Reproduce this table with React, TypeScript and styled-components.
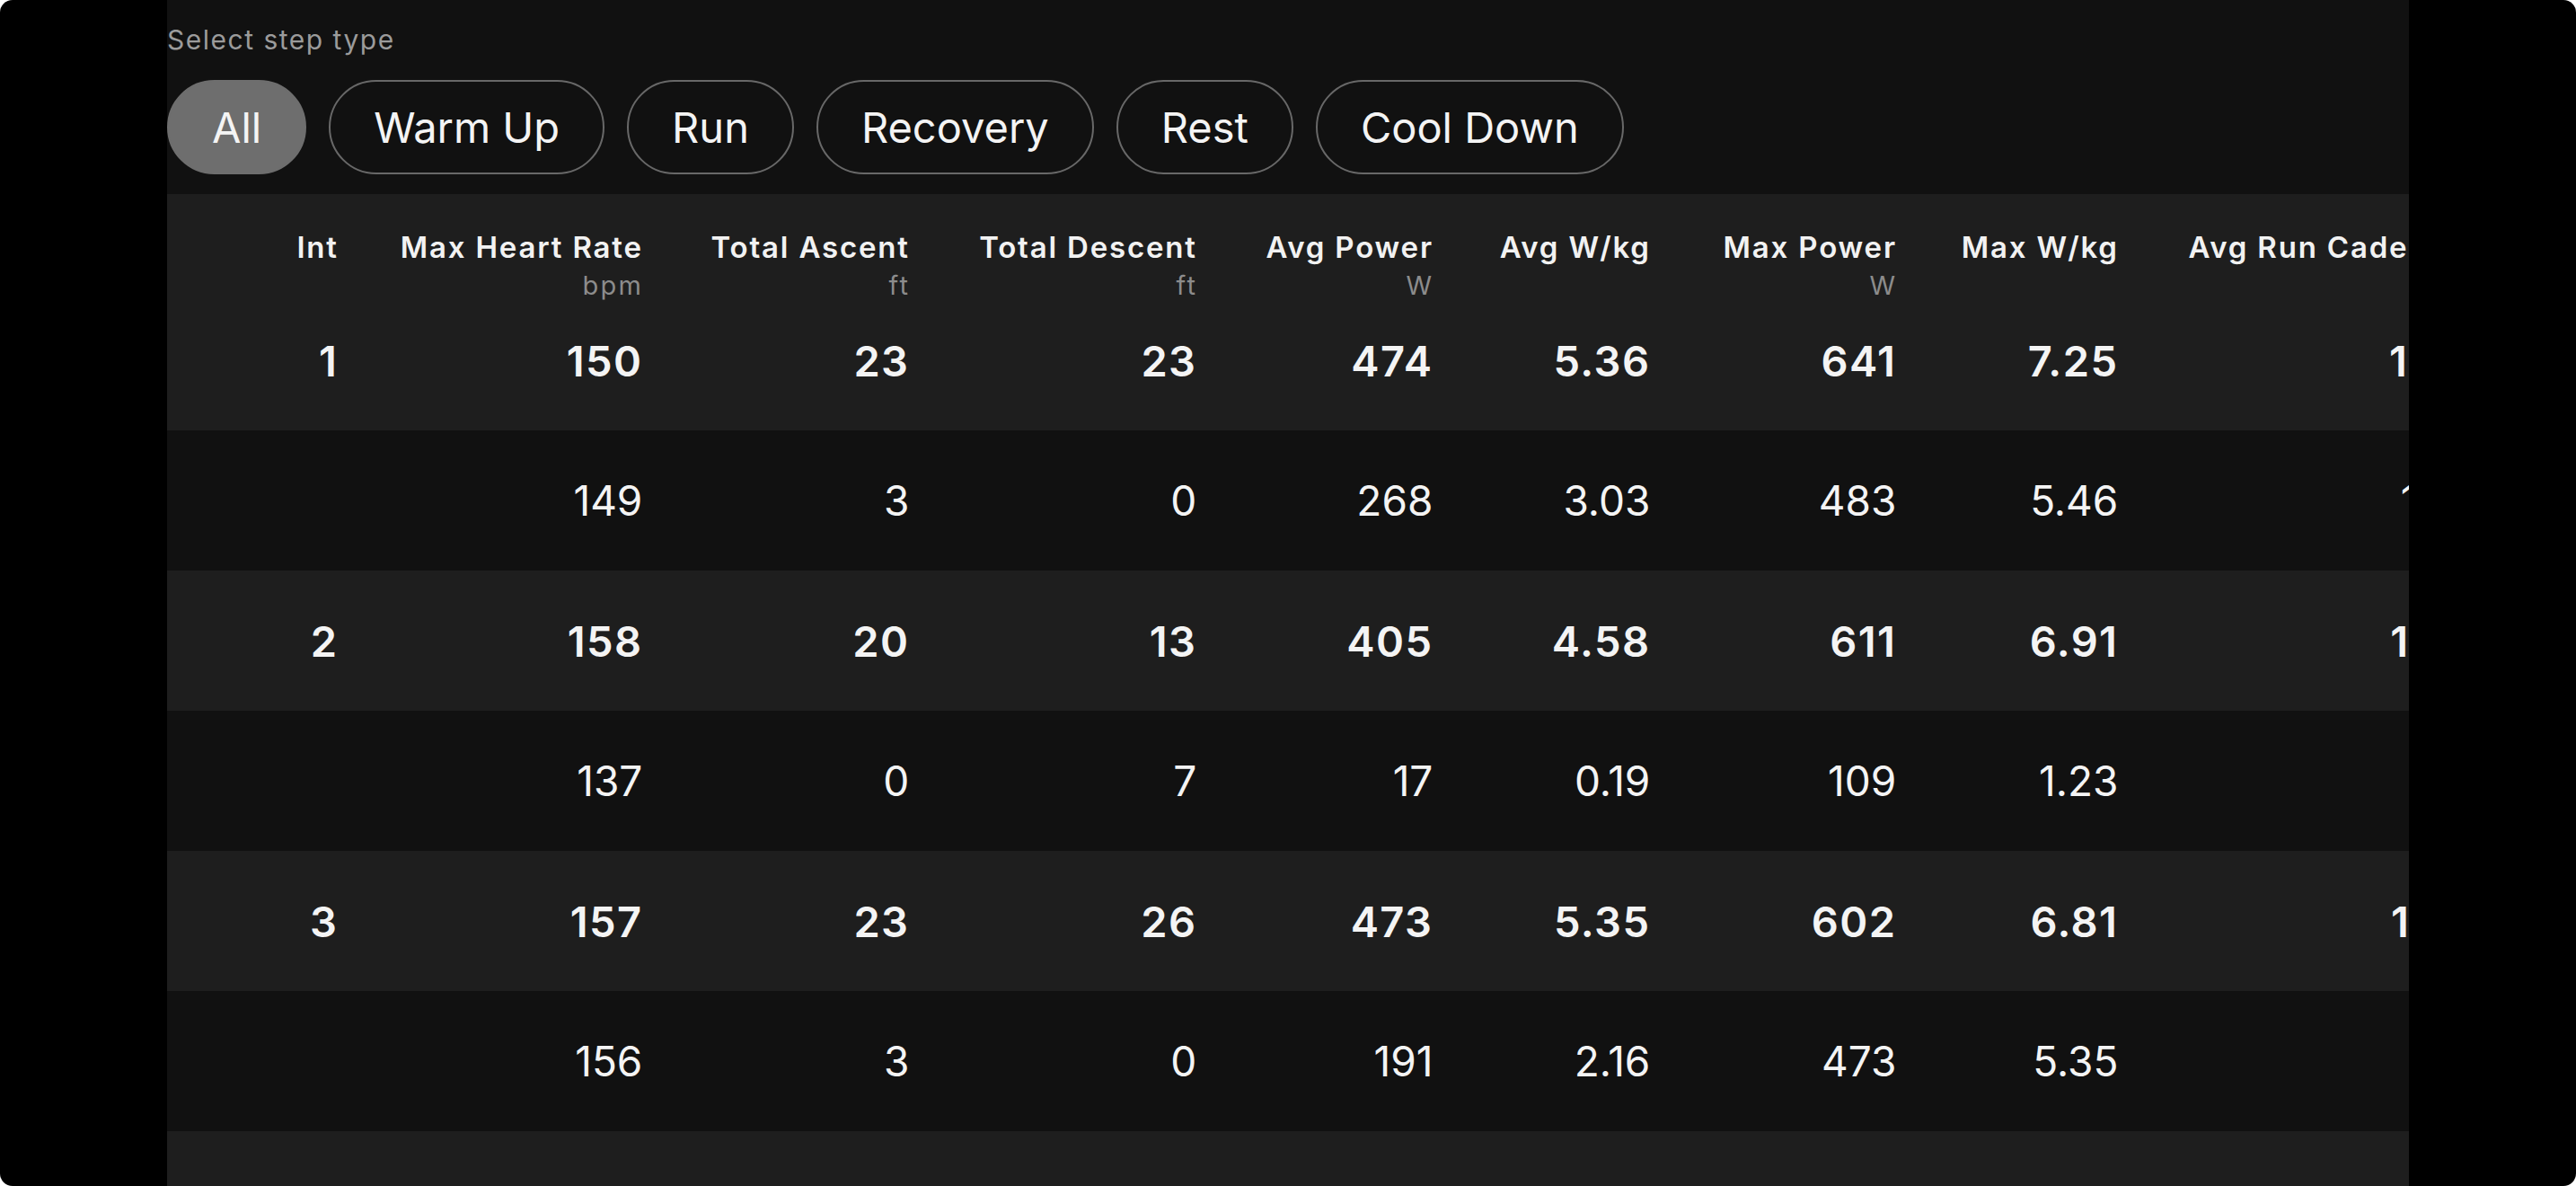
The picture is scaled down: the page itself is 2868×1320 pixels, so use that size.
import React from "react";
import styled, { createGlobalStyle } from "styled-components";

const GlobalStyle = createGlobalStyle`
  html, body {
    margin: 0;
    padding: 0;
    background: #ffffff;
  }
  body {
    font-family: Inter, "Liberation Sans", "Noto Sans", sans-serif;
    -webkit-font-smoothing: antialiased;
  }
  * { box-sizing: border-box; }
`;

const Frame = styled.div`
  width: 2868px;
  height: 1320px;
  background: #000000;
  border-radius: 14px;
  overflow: hidden;
  display: flex;
  justify-content: center;
`;

const Panel = styled.main`
  width: 2496px;
  height: 100%;
  background: #111111;
  overflow: hidden;
  display: flex;
  flex-direction: column;
`;

const FilterSection = styled.section`
  padding-top: 27px;
  display: flex;
  flex-direction: column;
  gap: 27px;
  margin-bottom: 22px;
`;

const FilterLabel = styled.div`
  font-size: 30px;
  line-height: 35px;
  color: #9b9b9b;
  letter-spacing: 0.05em;
`;

const PillRow = styled.div`
  display: flex;
  gap: 25px;
`;

const Pill = styled.button<{ $active?: boolean }>`
  height: 105px;
  padding: 0 48px;
  border-radius: 999px;
  border: 2px solid ${(p) => (p.$active ? "#6e6e6e" : "#686868")};
  background: ${(p) => (p.$active ? "#6e6e6e" : "transparent")};
  color: #f4f4f4;
  font-family: inherit;
  font-size: 47px;
  font-weight: 400;
  line-height: 57px;
  cursor: pointer;
`;

const COLS = "189px 339px 297px 320px 263px 242px 274px 247px 387px";

const HeaderRow = styled.div`
  position: relative;
  z-index: 1;
  display: grid;
  grid-template-columns: ${COLS};
  height: 107px;
  background: #1e1e1e;
  padding-top: 43px;
`;

const HeadCell = styled.div`
  display: flex;
  flex-direction: column;
  align-items: flex-end;
  white-space: nowrap;
`;

const HeadTitle = styled.span`
  font-size: 33px;
  line-height: 33px;
  font-weight: 600;
  color: #f2f2f2;
  letter-spacing: 0.055em;
  margin-right: -0.055em;
`;

const HeadUnit = styled.span`
  margin-top: 11px;
  font-size: 29px;
  line-height: 29px;
  font-weight: 400;
  color: #8c8c8c;
  letter-spacing: 0.08em;
  margin-right: -0.08em;
`;

const DataRow = styled.div<{ $summary?: boolean }>`
  display: grid;
  grid-template-columns: ${COLS};
  height: 156px;
  flex-shrink: 0;
  align-items: center;
  background: ${(p) => (p.$summary ? "#1e1e1e" : "#111111")};
  color: #f4f4f4;
  font-size: ${(p) => (p.$summary ? "47px" : "46px")};
  font-weight: ${(p) => (p.$summary ? 600 : 400)};
  letter-spacing: ${(p) => (p.$summary ? "0.03em" : "0")};
  line-height: 1;
`;

const Cell = styled.div`
  text-align: right;
  white-space: nowrap;
`;

const CellText = styled.span`
  margin-right: -0.03em;
`;

const columns: { title: string; unit?: string }[] = [
  { title: "Int" },
  { title: "Max Heart Rate", unit: "bpm" },
  { title: "Total Ascent", unit: "ft" },
  { title: "Total Descent", unit: "ft" },
  { title: "Avg Power", unit: "W" },
  { title: "Avg W/kg" },
  { title: "Max Power", unit: "W" },
  { title: "Max W/kg" },
  { title: "Avg Run Cadence", unit: "spm" },
];

const rows: { summary: boolean; values: string[] }[] = [
  { summary: true, values: ["1", "150", "23", "23", "474", "5.36", "641", "7.25", "184"] },
  { summary: false, values: ["", "149", "3", "0", "268", "3.03", "483", "5.46", "178"] },
  { summary: true, values: ["2", "158", "20", "13", "405", "4.58", "611", "6.91", "183"] },
  { summary: false, values: ["", "137", "0", "7", "17", "0.19", "109", "1.23", "62"] },
  { summary: true, values: ["3", "157", "23", "26", "473", "5.35", "602", "6.81", "182"] },
  { summary: false, values: ["", "156", "3", "0", "191", "2.16", "473", "5.35", "84"] },
  { summary: true, values: ["4", "153", "20", "20", "462", "5.22", "618", "6.99", "182"] },
];

const stepTypes = ["All", "Warm Up", "Run", "Recovery", "Rest", "Cool Down"];

export default function App() {
  return (
    <>
      <GlobalStyle />
      <Frame>
        <Panel>
          <FilterSection>
            <FilterLabel>Select step type</FilterLabel>
            <PillRow>
              {stepTypes.map((t) => (
                <Pill key={t} $active={t === "All"}>
                  {t}
                </Pill>
              ))}
            </PillRow>
          </FilterSection>
          <HeaderRow>
            {columns.map((c) => (
              <HeadCell key={c.title}>
                <HeadTitle>{c.title}</HeadTitle>
                {c.unit && <HeadUnit>{c.unit}</HeadUnit>}
              </HeadCell>
            ))}
          </HeaderRow>
          {rows.map((r, i) => (
            <DataRow key={i} $summary={r.summary}>
              {r.values.map((v, j) => (
                <Cell key={j}>
                  <CellText>{v}</CellText>
                </Cell>
              ))}
            </DataRow>
          ))}
        </Panel>
      </Frame>
    </>
  );
}
